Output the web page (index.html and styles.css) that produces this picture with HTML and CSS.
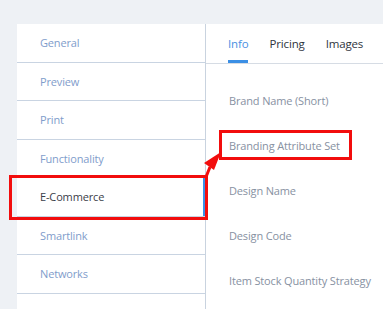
FILE: index.html
```html
<!DOCTYPE html>
<html lang="en">
<head>
  <meta charset="UTF-8" />
  <title>Product Settings</title>
  <meta name="viewport" content="width=device-width, initial-scale=1.0" />
  <link rel="stylesheet" href="styles.css">
</head>
<body>
  <div class="page">
    <ul class="sidebar">
      <li class="side-item">General</li>
      <li class="side-item">Preview</li>
      <li class="side-item">Print</li>
      <li class="side-item">Functionality</li>
      <li class="side-item active">E-Commerce</li>
      <li class="side-item">Smartlink</li>
      <li class="side-item">Networks</li>
    </ul>

    <div class="panel">
      <div class="tabs">
        <span class="tab active">Info</span>
        <span class="tab">Pricing</span>
        <span class="tab">Images</span>
      </div>
      <div class="fields">
        <div class="field">Brand Name (Short)</div>
        <div class="field">Branding Attribute Set</div>
        <div class="field">Design Name</div>
        <div class="field">Design Code</div>
        <div class="field">Item Stock Quantity Strategy</div>
      </div>
    </div>
  </div>

  <!-- annotation overlay -->
  <div class="mark mark-side"></div>
  <div class="mark mark-field"></div>
  <svg class="arrow" width="383" height="309" viewBox="0 0 383 309">
    <line x1="206" y1="177" x2="210" y2="167" stroke="#f20d0d" stroke-width="3" />
    <polygon points="221,152 204,163 214,170" fill="#f20d0d" />
  </svg>
</body>
</html>
```

FILE: styles.css
```css
body {
  margin: 0;
  background: #eef1f5;
  font-family: 'Open Sans', 'Noto Sans', sans-serif;
  font-size: 11px;
  letter-spacing: -0.15px;
  overflow: hidden;
}

.page {
  display: flex;
  padding: 24px 0 0 17px;
  height: 309px;
  box-sizing: border-box;
}

.sidebar {
  list-style: none;
  margin: 0;
  padding: 0;
  width: 189px;
  background: #fff;
  border-right: 1px solid #c9d3df;
  box-sizing: border-box;
}

.side-item {
  height: 38.5px;
  box-sizing: border-box;
  display: flex;
  align-items: center;
  padding-left: 23px;
  border-bottom: 1px solid #c9d4e2;
  color: #7f9dcb;
}

.side-item.active {
  color: #3b4049;
  box-shadow: inset -2px 0 0 #3a8ee6;
}

.panel {
  flex: 1;
  background: #fff;
}

.tabs {
  display: flex;
  gap: 21px;
  height: 39px;
  padding-left: 22px;
  border-bottom: 1px solid #d6dce4;
}

.tab {
  display: flex;
  align-items: center;
  font-size: 11.5px;
  color: #2f3540;
  border-bottom: 3px solid transparent;
  padding-top: 3px;
}

.tab.active {
  color: #4a90e2;
  border-bottom-color: #3b8fe5;
}

.fields {
  padding: 14px 0 0 23px;
}

.field {
  height: 45px;
  display: flex;
  align-items: center;
  color: #8791a2;
}

.mark {
  position: absolute;
  border: 3px solid #f20d0d;
  box-sizing: border-box;
}

.mark-side {
  left: 9px;
  top: 175px;
  width: 199px;
  height: 45px;
}

.mark-field {
  left: 219px;
  top: 130px;
  width: 133px;
  height: 30px;
}

.arrow {
  position: absolute;
  left: 0;
  top: 0;
}
```
